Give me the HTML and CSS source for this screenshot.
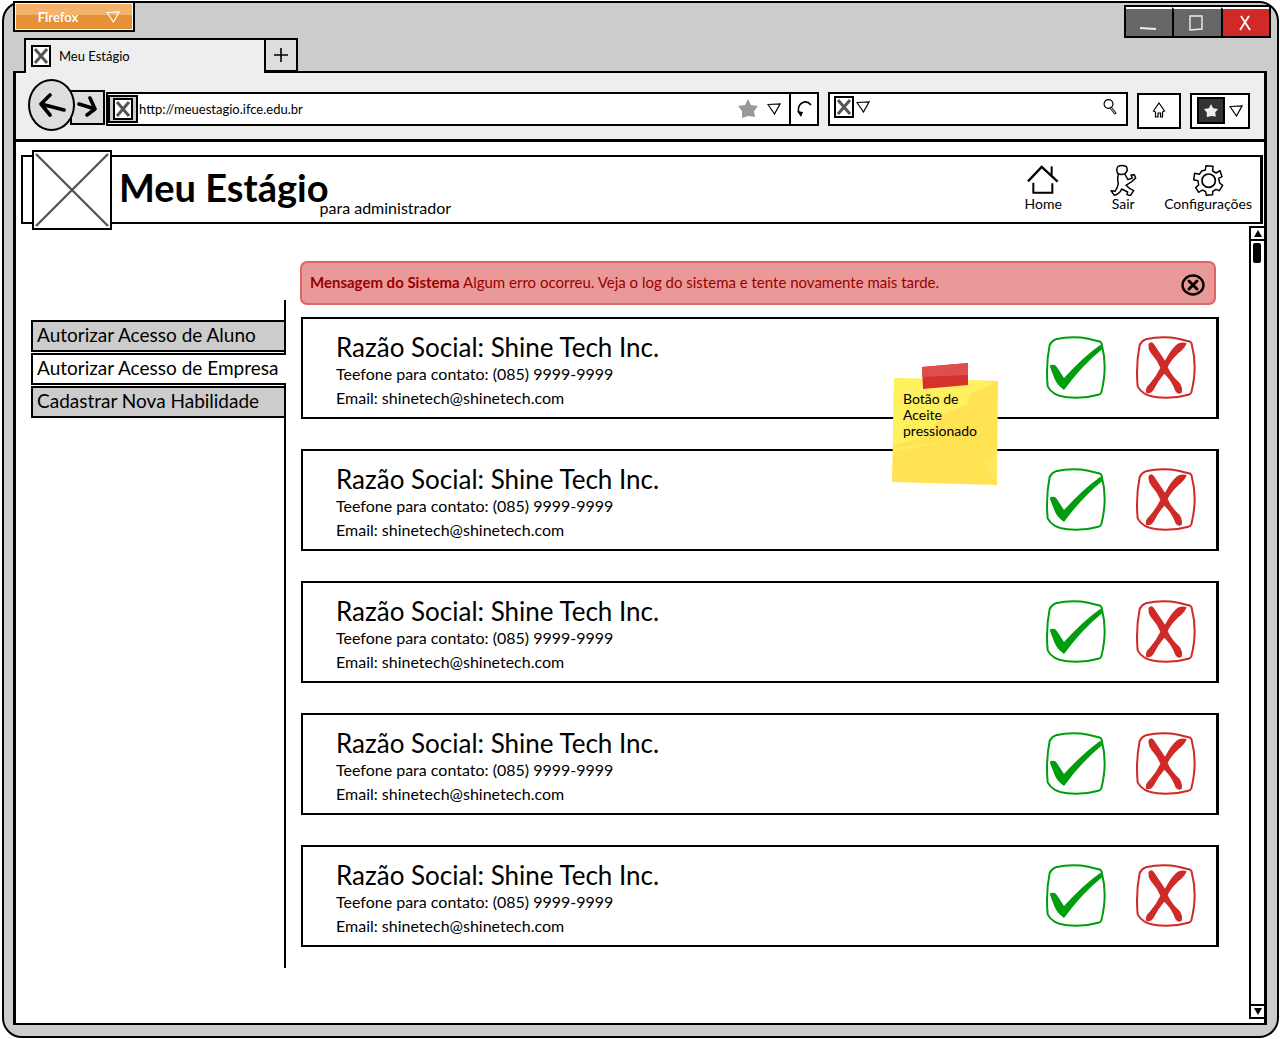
FILE: index.html
```html
<!DOCTYPE html>
<html lang="pt-BR">
<head>
<meta charset="utf-8">
<title>Meu Estágio</title>
<link rel="stylesheet" href="styles.css">
</head>
<body>
<svg class="defs" aria-hidden="true">
  <symbol id="accept" viewBox="0 0 186 192">
    <path d="M14 30Q20 17 32 13Q80 2 130 11L166 20Q171 24 171 32Q188 96 169 172Q166 178 160 179Q115 192 66 187Q22 182 8 154Q2 90 14 30Z" fill="none" stroke="#009e0f" stroke-width="6"/>
    <path d="M15 96Q13 90 21 89Q32 88 35 95L57 129Q112 68 166 29L173 41Q110 92 57 165Q36 150 29 132Z" fill="#009e0f"/>
  </symbol>
  <symbol id="reject" viewBox="0 0 186 192">
    <path d="M14 30Q20 17 32 13Q80 2 130 11L166 20Q171 24 171 32Q188 96 169 172Q166 178 160 179Q115 192 66 187Q22 182 8 154Q2 90 14 30Z" fill="none" stroke="#cf2a27" stroke-width="6"/>
    <path d="M41 26Q49 16 57 28L90 77Q108 42 128 26Q145 20 155 25Q150 40 130 55Q108 76 98 96Q108 120 134 144Q144 158 140 174Q129 181 121 168Q112 140 88 116Q70 136 56 164Q46 179 33 173Q31 157 43 148Q64 124 76 98Q67 76 49 56Q38 42 41 26Z" fill="#cf2a27"/>
  </symbol>
  <symbol id="down" viewBox="0 0 14 12"><path d="M1 1.5L13 1L7.5 11Z" fill="none" stroke="currentColor" stroke-width="1.2"/></symbol>
  <symbol id="star" viewBox="0 0 20 20"><path d="M10 0L13 6L20 7L16 12L17 18L10 17L4 19L4 12L0 7L7 6Z" fill="currentColor"/></symbol>
  <symbol id="image" viewBox="0 0 20 22"><path d="M1 1H19V21H1Z" fill="#fff" stroke="#000" stroke-width="2"/><path d="M4 4L16 18M16 4L4 18" stroke="#555" stroke-width="3"/></symbol>
</svg>

<div class="window">
  <div class="titlebar">
    <button class="firefox" type="button">Firefox <svg class="arrow"><use href="#down"/></svg></button>
    <div class="controls">
      <button type="button" aria-label="Minimizar"><svg viewBox="0 0 18 18"><path d="M1 14L17 15" stroke="#eee" stroke-width="2"/></svg></button>
      <button type="button" aria-label="Maximizar"><svg viewBox="0 0 18 18"><path d="M3 2L15 2V15L3 16Z" fill="none" stroke="#eee" stroke-width="1.4"/></svg></button>
      <button class="close" type="button" aria-label="Fechar"><svg viewBox="0 0 18 18"><path d="M5 2L14 16M13 2L4 16" stroke="#fff" stroke-width="1.8"/></svg></button>
    </div>
  </div>

  <div class="tabs">
    <div class="tab"><svg class="favicon"><use href="#image"/></svg>Meu Estágio</div>
    <button class="new-tab" type="button" aria-label="Nova aba"><svg viewBox="0 0 16 16"><path d="M8 1V15M1 8H15" stroke="#000" stroke-width="1.6"/></svg></button>
  </div>

  <div class="frame">
    <div class="toolbar">
      <div class="history">
        <button class="back" type="button" aria-label="Voltar"><svg viewBox="0 0 28 26"><path d="M12 3L3 12L12 23M3 12L26 18" fill="none" stroke="#000" stroke-width="3.6" stroke-linecap="round" stroke-linejoin="round"/></svg></button>
        <button class="forward" type="button" aria-label="Avançar"><svg viewBox="0 0 22 22"><path d="M2 8L18 13M13 2L18 13L10 19" fill="none" stroke="#000" stroke-width="3.6" stroke-linecap="round" stroke-linejoin="round"/></svg></button>
      </div>
      <div class="address">
        <span class="site"><svg class="favicon"><use href="#image"/></svg></span>
        <input type="text" aria-label="Endereço" value="http://meuestagio.ifce.edu.br">
        <svg class="star"><use href="#star"/></svg>
        <svg class="arrow"><use href="#down"/></svg>
        <button class="reload" type="button" aria-label="Recarregar"><svg viewBox="0 0 16 18"><path d="M15 5Q11 0 6 3Q1 6 3 13" fill="none" stroke="#000" stroke-width="1.5"/><path d="M1 11L7 12L5 17Z"/></svg></button>
      </div>
      <div class="search">
        <svg class="favicon"><use href="#image"/></svg>
        <svg class="arrow"><use href="#down"/></svg>
        <input type="text" aria-label="Pesquisar">
        <svg class="lens" viewBox="0 0 14 16"><circle cx="5.5" cy="5" r="4.4" fill="none" stroke="#000" stroke-width="1.2"/><path d="M8 9L12 14" stroke="#222" stroke-width="2.8" stroke-linecap="round"/><path d="M8 9L12 14" stroke="#fff" stroke-width="0.8"/></svg>
      </div>
      <button class="tool" type="button" aria-label="Página inicial"><svg class="small-home" viewBox="0 0 14 17"><path d="M7 1L12.5 9L10.5 10V15L8.500 15V11H6V15H3.5V10L1.5 9Z" fill="none" stroke="#000" stroke-width="1.2"/></svg></button>
      <button class="tool bookmarks" type="button" aria-label="Favoritos"><span><svg><use href="#star"/></svg></span><svg class="arrow"><use href="#down"/></svg></button>
    </div>

    <header class="header">
      <svg class="logo" viewBox="0 0 80 80"><path d="M1 1H79V79H1Z" fill="#fff" stroke="#000" stroke-width="2"/><path d="M4 4L76 76M76 4L4 76" stroke="#555" stroke-width="2.4"/></svg>
      <h1>Meu Estágio</h1>
      <p>para administrador</p>
      <nav>
        <a href="#"><svg viewBox="0 0 96 96"><path d="M3 52L44 9L92 53" fill="none" stroke="#000" stroke-width="7"/><path d="M74 7V34" stroke="#000" stroke-width="6"/><path d="M19 56V86H76V58" fill="none" stroke="#000" stroke-width="6"/></svg>Home</a>
        <a href="#"><svg viewBox="0 0 96 96"><path d="M33 7Q47 1 58 8Q65 20 54 29Q42 34 32 28Q26 16 33 7ZM34 30Q30 48 34 58Q32 72 24 82L12 80L22 94Q38 90 44 75L62 84L60 92L70 95L80 80Q66 74 57 64Q76 54 86 42L82 32L72 33L76 42L63 47L53 30" fill="none" stroke="#000" stroke-width="4.4" stroke-linejoin="round"/></svg>Sair</a>
        <a href="#"><svg viewBox="0 0 96 96"><path d="M40 18L42 5L63 7L62 21L72 27L84 20L90 38L80 43L83 57L92 64L82 80L72 76L62 82L62 92L43 94L41 83L31 78L20 85L11 71L20 63L18 50L5 47L8 28L22 31L29 21Z" fill="none" stroke="#000" stroke-width="4.4" stroke-linejoin="round"/><circle cx="50" cy="50" r="20" fill="none" stroke="#000" stroke-width="5"/></svg>Configurações</a>
      </nav>
    </header>

    <div class="page">
      <nav class="sidebar">
        <a href="#">Autorizar Acesso de Aluno</a>
        <a class="selected" href="#" aria-current="page">Autorizar Acesso de Empresa</a>
        <a href="#">Cadastrar Nova Habilidade</a>
      </nav>

      <main>
        <div class="alert" role="alert">
          <p><strong>Mensagem do Sistema</strong> Algum erro ocorreu. Veja o log do sistema e tente novamente mais tarde.</p>
          <button type="button" aria-label="Dispensar"><svg viewBox="0 0 24 24"><ellipse cx="12" cy="12" rx="10.5" ry="9.5" fill="none" stroke="#000" stroke-width="2.4"/><path d="M8 8L16 16M16 8L8 16" stroke="#000" stroke-width="3" stroke-linecap="round"/></svg></button>
        </div>
        <div class="companies">
          <article class="card">
            <div class="info"><h2>Razão Social: Shine Tech Inc.</h2><p>Teefone para contato: (085) 9999-9999</p><p>Email: shinetech@shinetech.com</p></div>
            <button type="button" aria-label="Aceitar"><svg><use href="#accept"/></svg></button>
            <button type="button" aria-label="Recusar"><svg><use href="#reject"/></svg></button>
          </article>
          <article class="card">
            <div class="info"><h2>Razão Social: Shine Tech Inc.</h2><p>Teefone para contato: (085) 9999-9999</p><p>Email: shinetech@shinetech.com</p></div>
            <button type="button" aria-label="Aceitar"><svg><use href="#accept"/></svg></button>
            <button type="button" aria-label="Recusar"><svg><use href="#reject"/></svg></button>
          </article>
          <article class="card">
            <div class="info"><h2>Razão Social: Shine Tech Inc.</h2><p>Teefone para contato: (085) 9999-9999</p><p>Email: shinetech@shinetech.com</p></div>
            <button type="button" aria-label="Aceitar"><svg><use href="#accept"/></svg></button>
            <button type="button" aria-label="Recusar"><svg><use href="#reject"/></svg></button>
          </article>
          <article class="card">
            <div class="info"><h2>Razão Social: Shine Tech Inc.</h2><p>Teefone para contato: (085) 9999-9999</p><p>Email: shinetech@shinetech.com</p></div>
            <button type="button" aria-label="Aceitar"><svg><use href="#accept"/></svg></button>
            <button type="button" aria-label="Recusar"><svg><use href="#reject"/></svg></button>
          </article>
          <article class="card">
            <div class="info"><h2>Razão Social: Shine Tech Inc.</h2><p>Teefone para contato: (085) 9999-9999</p><p>Email: shinetech@shinetech.com</p></div>
            <button type="button" aria-label="Aceitar"><svg><use href="#accept"/></svg></button>
            <button type="button" aria-label="Recusar"><svg><use href="#reject"/></svg></button>
          </article>
          <aside class="note">
            <svg viewBox="0 0 108 124"><path d="M3 16L107 19L106 123L1 120Z" fill="#ffe353"/><path d="M3 16L84 18L104 21L80 31L76 42L50 54L36 74L2 84Z" fill="#fff566" opacity=".7"/><path d="M4 85L54 80L2 90Z" fill="#fff566" opacity=".5"/><path d="M92 100L106 90V122Z" fill="#ffe970" opacity=".5"/><path d="M31 5L77 1V23L32 27Z" fill="#d7312e"/><path d="M31 5L77 1V13L31 15Z" fill="#dc4f4a"/></svg>
            <p>Botão de Aceite pressionado</p>
          </aside>
        </div>
      </main>

      <div class="scrollbar">
        <button type="button" aria-label="Rolar para cima"><svg viewBox="0 0 8 7"><path d="M4 0L8 7H0Z"/></svg></button>
        <div class="track"><div class="thumb"></div></div>
        <button type="button" aria-label="Rolar para baixo"><svg viewBox="0 0 8 7"><path d="M0 0H8L4 7Z"/></svg></button>
      </div>
    </div>
  </div>
</div>
</body>
</html>
```
FILE: styles.css
```css
* { box-sizing: border-box; }
body {
  margin: 0;
  background: #fff;
  color: #000;
  font-family: Lato, "Open Sans", sans-serif;
  font-size: 13px;
}
h1, h2, p { margin: 0; font-weight: 400; }
a { color: inherit; text-decoration: none; }
svg { display: block; flex: none; }
button, input { font: inherit; color: inherit; border: 0; padding: 0; background: none; }
button { display: flex; align-items: center; justify-content: center; flex: none; }
input { flex: 1; min-width: 0; outline: 0; }
.defs { display: none; }
.arrow { width: 14px; height: 12px; }
.favicon { width: 20px; height: 22px; }

.window {
  display: flex;
  flex-direction: column;
  min-height: calc(100vh - 2px);
  margin: 1px 1px 1px 2px;
  padding: 0 10px 11px 9px;
  border: 2px solid #000;
  border-radius: 20px;
  background: #ccc;
}
.titlebar { display: flex; justify-content: space-between; height: 35px; }
.firefox {
  gap: 28px;
  width: 122px;
  height: 31px;
  margin-top: -2px;
  padding-left: 10px;
  border: 2px solid #000;
  outline: 1px solid #fff;
  outline-offset: -3px;
  background: linear-gradient(#f6b26b 45%, #e69138 45%);
  color: #fff;
  font-weight: 700;
}
.controls {
  display: flex;
  width: 147px;
  height: 33px;
  margin: 2px -4px 0 0;
  border: 2px solid #000;
  background: #666;
}
.controls button { flex: 1; padding-right: 2px; border-top: 2px solid #fff; }
.controls button + button { border-left: 2px solid #000; }
.controls svg { width: 18px; height: 18px; }
.controls .close { background: #cf2a27; }

.tabs { display: flex; z-index: 1; margin: 0 0 -2px 11px; }
.tab {
  display: flex;
  align-items: center;
  gap: 8px;
  width: 242px;
  height: 35px;
  padding: 0 0 2px 5px;
  border: 2px solid #000;
  border-bottom: 0;
  background: #eee;
}
.new-tab { width: 32px; height: 34px; border: 2px solid #000; border-left: 0; background: #ddd; }
.new-tab svg { width: 16px; height: 16px; }

.frame { display: flex; flex: 1; flex-direction: column; border: 2px solid #000; border-width: 2px 3px; background: #fff; }
.toolbar {
  display: flex;
  align-items: center;
  gap: 9px;
  height: 69px;
  padding: 6px 14px 0 12px;
  border-bottom: 3px solid #000;
  background: #eee;
}
.history { display: flex; align-items: center; margin: -4px -8px 0 0; }
.back { z-index: 1; width: 47px; height: 52px; margin-top: -4px; border: 2px solid #000; border-radius: 50%; background: #ddd; }
.back svg { width: 28px; height: 26px; }
.forward { width: 35px; height: 35px; margin-left: -5px; border: 2px solid #000; background: #ddd; }
.forward svg { width: 22px; height: 22px; }
.address, .search { display: flex; align-items: center; height: 34px; border: 2px solid #000; background: #fff; }
.address { flex: 5; }
.search { flex: 2; gap: 2px; padding: 0 9px 4px 4px; }
.lens { width: 14px; height: 16px; }
.site { display: flex; align-items: center; justify-content: center; width: 30px; height: 28px; border: 2px solid #000; background: #ccc; }
.address input { padding-left: 1px; }
.star { width: 22px; height: 20px; margin-right: 8px; color: #999; }
.reload { width: 28px; height: 30px; margin-left: 8px; border-left: 2px solid #000; }
.reload svg { width: 16px; height: 18px; }
.tool { width: 44px; height: 36px; margin-top: 3px; border: 2px solid #000; background: #fff; }
.small-home { width: 14px; height: 17px; }
.bookmarks { gap: 4px; width: 60px; }
.bookmarks span { display: flex; align-items: center; justify-content: center; width: 28px; height: 27px; border: 2px solid #000; background: #333; color: #eee; }
.bookmarks span svg { width: 14px; height: 14px; }

.header { display: flex; align-items: center; height: 69px; margin: 13px 1px 0 5px; padding: 0 8px 0 9px; border: 2px solid #000; border-right-width: 3px; }
.logo { width: 80px; height: 80px; }
.header h1 { margin: -6px 0 0 7px; font-size: 38px; line-height: 40px; font-weight: 700; }
.header p { align-self: flex-end; margin: 0 0 4px -9px; font-size: 16px; line-height: 20px; }
.header nav { display: flex; gap: 2px; margin: -4px 0 0 auto; }
.header a { display: flex; flex-direction: column; align-items: center; min-width: 78px; font-size: 14px; line-height: 16px; }
.header a svg { width: 32px; height: 32px; }

.page { display: flex; flex: 1; margin-bottom: 4px; }
.sidebar {
  display: flex;
  flex-direction: column;
  gap: 1px;
  width: 255px;
  margin: 76px 0 51px 15px;
  padding-top: 20px;
  border-right: 2px solid #000;
  font-size: 19px;
}
.sidebar a { height: 32px; padding-left: 4px; border: 2px solid #000; border-right: 0; background: #ccc; line-height: 26px; white-space: nowrap; }
.sidebar .selected { margin-right: -2px; background: #fff; }

main { flex: 1; min-width: 0; padding: 37px 30px 20px 14px; }
.alert { display: flex; align-items: center; justify-content: space-between; height: 44px; margin-right: 3px; padding: 0 9px 2px 8px; border: 2px solid #e06666; border-radius: 7px; background: #ea9999; color: #900; font-size: 15px; }
.alert strong { font-weight: 700; }
.alert svg { width: 24px; height: 24px; margin-top: 6px; }
.companies { display: flex; position: relative; flex-direction: column; gap: 30px; margin: 12px 0 0 1px; }
.card { display: flex; align-items: center; gap: 28px; height: 102px; padding: 0 19px 2px 33px; border: 2px solid #000; border-right-width: 3px; }
.info { flex: 1; padding-top: 8px; }
.card h2 { font-size: 26px; line-height: 30px; }
.card p { font-size: 16px; line-height: 24px; }
.card svg { width: 62px; height: 64px; }

.note { position: absolute; top: 45px; right: 220px; width: 108px; }
.note svg { width: 108px; height: 124px; }
.note p { position: absolute; top: 29px; left: 12px; width: 80px; font-size: 14px; line-height: 16px; }

.scrollbar { display: flex; flex-direction: column; width: 15px; margin-top: 2px; border: 2px solid #000; border-right: 0; }
.scrollbar button { height: 11px; }
.scrollbar svg { width: 8px; height: 7px; }
.track { flex: 1; padding: 2px; border: 2px solid #000; border-width: 2px 0; }
.thumb { width: 8px; height: 20px; border-radius: 2px; background: #000; }
```
